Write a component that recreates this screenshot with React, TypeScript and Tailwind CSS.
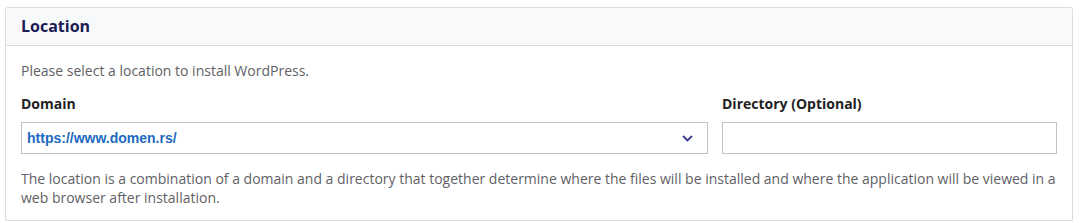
export default function App() {
  return (
    <div className="bg-white pt-[7px] pl-[5px] pr-[7px] font-['Open_Sans',sans-serif]">
      <div className="rounded-t-[3px] border border-[#dcdcdc]">
        <div className="h-[38px] border-b border-[#dcdcdc] bg-[#f8f9fa] px-[15px] pt-[7px]">
          <h3 className="text-[16px] font-bold leading-[22px] text-[#1b1b55]">Location</h3>
        </div>
        <div className="px-[15px] pt-[15px] pb-[13px] text-[14px] text-[#5f5f66]">
          <p className="leading-[20px]">Please select a location to install WordPress.</p>
          <div className="mt-[13px] flex gap-[14px]">
            <div className="w-[687px]">
              <div className="font-bold leading-[20px] text-[#222]">Domain</div>
              <div className="mt-[8px] flex h-[32px] items-center justify-between border border-[#c2c2c2] pl-[5px] pr-[14px]">
                <span className="font-['Liberation_Sans',sans-serif] text-[14px] font-bold text-[#1d6ac0]">
                  https://www.domen.rs/
                </span>
                <svg width="11" height="7" viewBox="0 0 11 7" fill="none">
                  <path d="M1 1l4.5 4.5L10 1" stroke="#3a3a8c" strokeWidth="1.8" />
                </svg>
              </div>
            </div>
            <div className="w-[335px]">
              <div className="font-bold leading-[20px] text-[#222]">Directory (Optional)</div>
              <div className="mt-[8px] h-[32px] border border-[#c2c2c2]" />
            </div>
          </div>
          <p className="mt-[15px] leading-[19px]">
            The location is a combination of a domain and a directory that together determine where the files will be installed and where the application will be viewed in a web browser after installation.
          </p>
        </div>
      </div>
    </div>
  );
}
